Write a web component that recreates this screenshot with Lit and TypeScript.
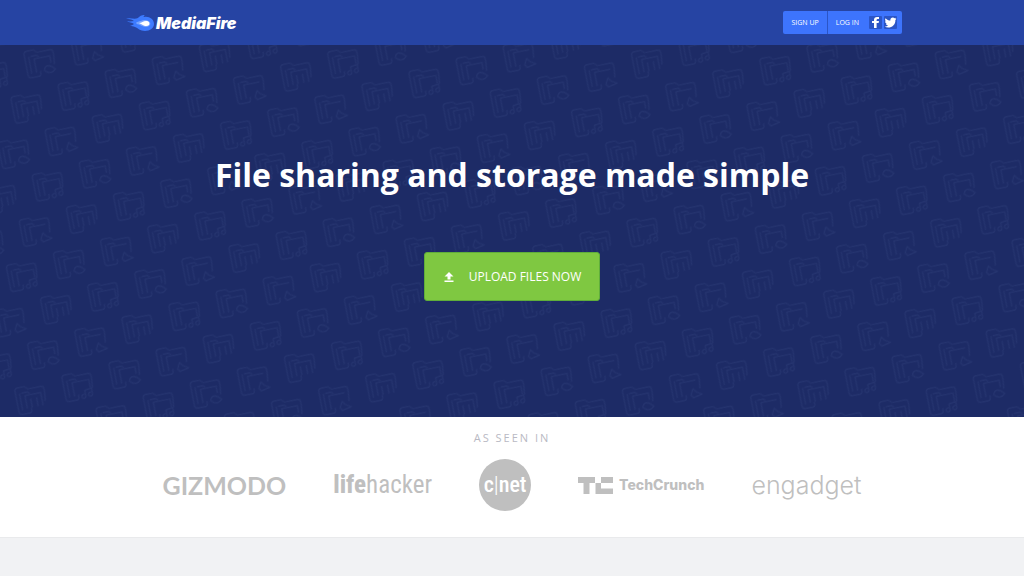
import { LitElement, html, css, svg } from "lit";
import { customElement } from "lit/decorators.js";

// Centre badge shown on each folder of the hero pattern, one per file type.
const badges = [
  svg`<path d="M-6 8V-5H10V8M-1 -1V8M5 -1V8" />`,
  svg`<path d="M-6 9V-5H10M3 9L6 3L9 7L14 10L5 12Z" />`,
  svg`<path d="M-6 9V-5H10V2M2 8C4 2 9 4 13 9C9 13 5 12 2 8Z" />`,
  svg`<path d="M-6 9V-5H11V3M5 11V5L12 4V10M5 11A2 2 0 1 1 4 9M12 10A2 2 0 1 1 11 8" />`,
];

@customElement("folder-pattern")
export class FolderPattern extends LitElement {
  static styles = css`
    :host {
      display: block;
      overflow: hidden;
    }
    .art {
      display: block;
      width: 100%;
      height: 100%;
    }
  `;

  // The tile is skewed onto a slanted lattice; each folder undoes the skew before its own tilt.
  render() {
    return html`<svg class="art" aria-hidden="true">
      <defs>
        <pattern id="folders" width="192" height="96" patternUnits="userSpaceOnUse"
          patternTransform="matrix(0.981 -0.269 -0.269 0.944 28 63) translate(-24 -24)">
          <g fill="none" stroke="#25346f" stroke-width="1.2" stroke-linejoin="round">
            ${[0, 1].map((row) =>
              [0, 1, 2, 3].map(
                (col) => svg`<g transform="translate(${24 + col * 48} ${24 + row * 48}) matrix(1.106 0.315 0.315 1.149 0 0) rotate(-11)">
                  <path d="M-15 -11Q-15 -14 -12 -14H-5L-2 -11H11Q14 -11 14 -8V-5M-15 -11V10Q-15 13 -12 13H-4Q-2 13 -2 10V8M14 -5L13 4" />
                  <path d="M-11 -8V9M-9 -8H-3L-1 -6" />
                  ${badges[(col * 3 + row * 2) % 4]}
                </g>`
              )
            )}
          </g>
        </pattern>
      </defs>
      <rect width="100%" height="100%" fill="url(#folders)" />
    </svg>`;
  }
}

@customElement("app-root")
export class AppRoot extends LitElement {
  static styles = css`
    :host {
      display: flex;
      flex-direction: column;
      min-height: 100vh;
      background: #f1f2f4;
      font-family: "Open Sans", sans-serif;
    }
    .top {
      background: #2644a3;
      padding: 0 24px;
    }
    .bar {
      display: flex;
      align-items: center;
      justify-content: space-between;
      max-width: 780px;
      height: 45px;
      margin: 0 auto;
    }
    .brand {
      display: flex;
      align-items: center;
      gap: 2px;
      padding-left: 4px;
      color: #fff;
      font: italic 900 16px/20px Inter, sans-serif;
      text-decoration: none;
    }
    .flame {
      width: 28px;
      height: 18px;
    }
    .account {
      display: flex;
      height: 23px;
      border-radius: 2px;
      overflow: hidden;
      background: #3d74fd;
    }
    .login {
      display: flex;
      align-items: center;
      gap: 2px;
      padding-right: 5px;
      border-left: 1px solid #2b55c6;
    }
    .link {
      display: flex;
      align-items: center;
      height: 100%;
      padding: 0 8px;
      color: #fff;
      font-size: 7px;
      text-decoration: none;
    }
    .social {
      display: block;
      width: 13px;
      height: 13px;
    }
    .icon {
      display: block;
      width: 100%;
      height: 100%;
    }
    .hero {
      display: grid;
      background: #1d2b66;
      color: #fff;
    }
    .hero > * {
      grid-area: 1 / 1;
    }
    .pitch {
      display: flex;
      flex-direction: column;
      align-items: center;
      gap: 53px;
      padding: 106px 24px 116px;
      z-index: 1;
    }
    .title {
      margin: 0;
      font-size: 32px;
      line-height: 48px;
      font-weight: 700;
      text-align: center;
    }
    .upload {
      display: flex;
      align-items: center;
      gap: 14px;
      height: 49px;
      padding: 0 18px;
      border: 1px solid #5fae3a;
      border-radius: 3px;
      background: #7fc841;
      color: #fff;
      font: 12px/16px "Open Sans", sans-serif;
      cursor: pointer;
    }
    .arrow {
      width: 12px;
      height: 12px;
    }
    .press {
      display: flex;
      flex-direction: column;
      align-items: center;
      gap: 14px;
      padding: 13px 24px 26px;
      background: #fff;
      border-bottom: 1px solid #e9eaec;
    }
    .seen {
      margin: 0;
      color: #b9b9c3;
      font-size: 11px;
      line-height: 15px;
      font-weight: 400;
      letter-spacing: 2px;
    }
    .logos {
      display: flex;
      flex-wrap: wrap;
      align-items: center;
      justify-content: center;
      gap: 16px 47px;
      margin: 0;
      padding: 0;
      list-style: none;
      color: #bfbfbf;
      white-space: nowrap;
    }
    .logo {
      display: flex;
      align-items: center;
      justify-content: center;
    }
    .gizmodo {
      font: 700 25px/32px Lato, sans-serif;
    }
    .lifehacker {
      font: 25px/32px "Roboto Condensed", Roboto, sans-serif;
    }
    .lifehacker b {
      font-weight: 800;
    }
    .cnet {
      width: 52px;
      height: 52px;
      border-radius: 50%;
      background: #bfbfbf;
      color: #fff;
      font: 500 22px/28px "Roboto Condensed", Roboto, sans-serif;
    }
    .thin {
      font-weight: 300;
    }
    .techcrunch {
      gap: 6px;
      font: 800 14px/20px Inter, sans-serif;
    }
    .tc {
      width: 35px;
      height: 17px;
    }
    .engadget {
      font: 300 25px/32px Inter, sans-serif;
    }
  `;

  render() {
    return html`
      <header class="top">
        <div class="bar">
          <a class="brand" href="#">
            <svg class="flame" viewBox="0 0 28 18" aria-hidden="true">
              <path fill="#3d7bff" d="M0 5C4 3 8 6 12 4C14 2 15 1 19 1C18 2 17 2 18 3C23 2 28 5 28 10C28 14 24 17 19 17C14 17 12 14 9 13C7 12 6 12 4 12C6 11 7 11 8 10C6 8 3 9 1 7C4 8 6 7 8 7C5 5 3 5 0 5Z" />
              <path fill="#78a5ff" d="M10 8C13 8 15 6 20 6C24 7 25 9 24 11C22 14 17 13 14 11C12 10 11 10 10 10C11 9 11 9 10 8Z" />
              <path fill="#fff" d="M13 9C16 9 17 7 20 7C23 7 24 9 23 11C21 13 18 12 15 10Z" />
            </svg>
            <span>MediaFire</span>
          </a>
          <nav class="account" aria-label="Account">
            <a class="link" href="#signup">SIGN UP</a>
            <div class="login">
              <a class="link" href="#login">LOG IN</a>
              <a class="social" href="#facebook" aria-label="Log in with Facebook">
                <svg class="icon" viewBox="0 0 13 13">
                  <rect width="13" height="13" rx="1" fill="#2b55c6" />
                  <path fill="#fff" d="M5 12V7H3V5H5V4C5 2 6 1 8 1H10V3H8.600Q7.600 3 7.600 4V5H10L9.600 7H7.600V12Z" />
                </svg>
              </a>
              <a class="social" href="#twitter" aria-label="Log in with Twitter">
                <svg class="icon" viewBox="0 0 13 13">
                  <rect width="13" height="13" rx="1" fill="#2b55c6" />
                  <path fill="#fff" d="M1.500 2.200C3 3.700 4.500 4.500 6.400 4.600C6 2.500 7.500 1.500 8.800 1.500C9.600 1.500 10.200 1.800 10.600 2.300L12.200 1.700L11.200 3L12.500 2.700L11.400 3.900C11.500 8.500 8 11.500 4.400 11.500C3 11.500 1.700 11.100 .700 10.400C2 10.500 3.200 10.200 4.100 9.400C3 9.300 2.200 8.600 1.900 7.700H2.900C1.700 7.300 1 6.400 1 5.200L2.100 5.500C1 4.600 .800 3.400 1.500 2.200Z" />
                </svg>
              </a>
            </div>
          </nav>
        </div>
      </header>
      <main>
        <section class="hero">
          <folder-pattern></folder-pattern>
          <div class="pitch">
            <h1 class="title">File sharing and storage made simple</h1>
            <button class="upload" type="button">
              <svg class="arrow" viewBox="0 0 12 12" aria-hidden="true">
                <path fill="#fff" d="M6 1L10.500 5.500H7.500V8.500H4.500V5.500H1.500ZM1.500 9.500H10.500V11H1.500Z" />
              </svg>
              <span>UPLOAD FILES NOW</span>
            </button>
          </div>
        </section>
        <section class="press">
          <h2 class="seen">AS SEEN IN</h2>
          <ul class="logos">
            <li class="logo gizmodo">GIZMODO</li>
            <li class="logo lifehacker"><b>life</b>hacker</li>
            <li class="logo cnet">c<span class="thin">|</span>net</li>
            <li class="logo techcrunch">
              <svg class="tc" viewBox="0 0 35 17" aria-hidden="true">
                <path fill="#bfbfbf" d="M0 0H17V6H11.500V17H5.500V6H0ZM23 0H35V6H23ZM17.500 6H23V11.500H35V17H17.500Z" />
              </svg>
              <span>TechCrunch</span>
            </li>
            <li class="logo engadget">engadget</li>
          </ul>
        </section>
      </main>
    `;
  }
}
